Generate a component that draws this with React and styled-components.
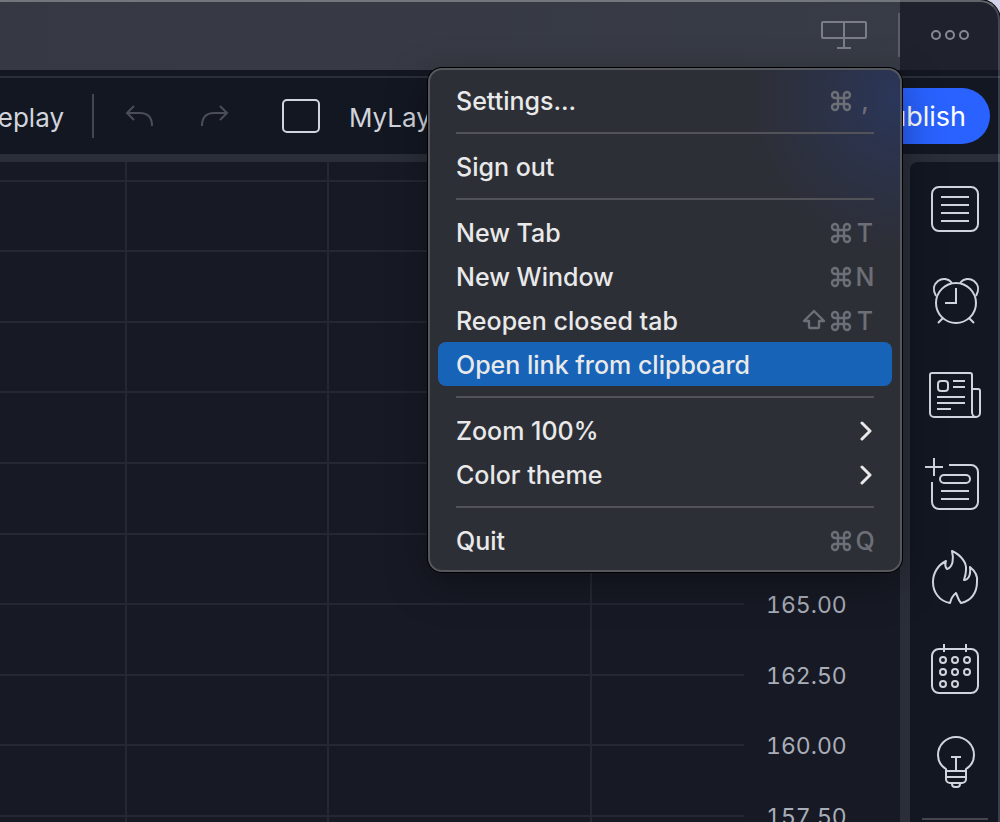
import { useState } from 'react';
import styled, { createGlobalStyle } from 'styled-components';

const GlobalStyle = createGlobalStyle`
* {
  box-sizing: border-box;
}
body {
  margin: 0;
  background: #d3d3ea;
  font-family: Inter, "Liberation Sans", sans-serif;
  overflow: hidden;
}
button {
  font: inherit;
  color: inherit;
  background: none;
  border: none;
  margin: 0;
  padding: 0;
  cursor: pointer;
}
`;

const Window = styled.div`
  position: relative;
  display: flex;
  flex-direction: column;
  height: 100vh;
  background: #131722;
  color: #d1d4dc;
  border-top-right-radius: 20px;
  box-shadow: 0 0 0 1px #000;
  overflow: hidden;

  &::after {
    content: "";
    position: absolute;
    inset: 0;
    border-top: 2px solid rgba(255, 255, 255, 0.3);
    border-right: 2px solid rgba(255, 255, 255, 0.17);
    border-top-right-radius: 20px;
    pointer-events: none;
  }
`;

const TitleBar = styled.header`
  display: flex;
  flex: none;
  height: 70px;
  background: linear-gradient(90deg, #363943, #383c46);
`;

const TitleTools = styled.div`
  display: flex;
  flex: 1;
  justify-content: flex-end;
  align-items: center;
  gap: 30px;
  color: #7b7e87;
`;

const MainMenuButton = styled.button`
  width: 100px;
  background: #1f222d;
  color: #868993;
  display: flex;
  align-items: center;
  justify-content: center;
`;

const Divider = styled.span`
  flex: none;
  width: 2px;
  height: 44px;
  background: ${(props) => props.$color};
`;

const Toolbar = styled.div`
  display: flex;
  flex: none;
  align-items: center;
  height: 78px;
  margin-top: 6px;
  padding-right: 10px;
  border-top: 2px solid #2a2e39;
  font-size: 26px;
`;

const ReplayButton = styled.button`
  display: flex;
  justify-content: flex-end;
  width: 64px;
  margin-right: 28px;
  padding-top: 2px;
  overflow: hidden;
`;

const HistoryButton = styled.button`
  display: flex;
  margin-left: ${(props) => props.$gap}px;
  color: #4b4e59;
`;

const LayoutButton = styled.button`
  display: flex;
  align-items: center;
  gap: 29px;
  margin-left: 52px;
`;

const LayoutSquare = styled.span`
  width: 38px;
  height: 34px;
  border: 2px solid #d1d4dc;
  border-radius: 5px;
`;

const LayoutName = styled.span`
  padding-top: 2px;
`;

const PublishButton = styled.button`
  height: 56px;
  margin-left: auto;
  padding: 0 24px;
  border-radius: 28px;
  background: #2962ff;
  color: #fff;
  font-size: 27px;
`;

const Body = styled.div`
  display: flex;
  flex: 1;
  min-height: 0;
  padding-top: 8px;
  background: #2a2e39;
`;

const Chart = styled.main`
  display: flex;
  flex: 1;
  min-width: 0;
  background: #171a25;
`;

const Plot = styled.svg`
  flex: 1;
  min-width: 0;
  height: 100%;
`;

const PriceAxis = styled.div`
  flex: none;
  width: 156px;
  padding: 56px 0 0 22px;
  overflow: hidden;
  color: #a9adb8;
  font-size: 23px;
  font-variant-numeric: tabular-nums;
`;

const Price = styled.div`
  height: 70px;
  line-height: 70px;

  &:nth-child(even) {
    height: 71px;
  }
`;

const Sidebar = styled.nav`
  display: flex;
  flex-direction: column;
  flex: none;
  width: 90px;
  margin-left: 10px;
  background: #131722;
  border-top-left-radius: 8px;
  overflow: hidden;
`;

const SideButton = styled.button`
  display: flex;
  flex: none;
  align-items: center;
  justify-content: center;
  height: 92px;
`;

const SideRule = styled.hr`
  flex: none;
  width: 66px;
  height: 2px;
  margin: 12px;
  border: none;
  background: #434651;
`;

const Menu = styled.div`
  position: absolute;
  top: 68px;
  right: 98px;
  z-index: 1;
  display: flex;
  flex-direction: column;
  width: 474px;
  padding: 8px;
  border: 2px solid #55575e;
  border-radius: 14px;
  background:
    radial-gradient(circle at 100% 6%, #2a375b 0, rgba(43, 52, 82, 0.8) 50px, rgba(45, 47, 55, 0) 150px),
    #2d2f37;
  background-origin: border-box;
  box-shadow: 0 0 0 1px #000, 0 12px 40px rgba(0, 0, 0, 0.35);
  color: #e9e9ea;
`;

const MenuItem = styled.button`
  display: flex;
  align-items: center;
  justify-content: space-between;
  height: 44px;
  padding: 2px 18px 0;
  border-radius: 8px;
  background: ${(props) => (props.$active ? '#1763b8' : 'transparent')};
  font-size: 25px;
  font-weight: 500;
  text-align: left;
`;

const MenuRule = styled.hr`
  width: auto;
  height: 2px;
  margin: 10px 18px;
  border: none;
  background: #515359;
`;

const Shortcut = styled.span`
  display: flex;
  align-items: center;
  gap: 3px;
  color: #6d6f77;
`;

const Key = styled.span`
  display: flex;
  justify-content: center;
  width: 18px;
`;

const Stroke = ({ size = 60, height = size, width = 2, children, ...rest }) => (
  <svg
    width={size}
    height={height}
    viewBox={`0 0 ${size} ${height}`}
    fill="none"
    stroke="currentColor"
    strokeWidth={width}
    aria-hidden="true"
    {...rest}
  >
    {children}
  </svg>
);

const CommandIcon = () => (
  <Stroke size={24} width={2.4}>
    <path d="M15 6v12a3 3 0 1 0 3-3H6a3 3 0 1 0 3 3V6a3 3 0 1 0-3 3h12a3 3 0 1 0-3-3" />
  </Stroke>
);

const ShiftIcon = () => (
  <Stroke size={24} width={2.4} strokeLinejoin="round">
    <path d="M12 2L2 12h5v6q0 1 1 1h8q1 0 1-1v-6h5z" />
  </Stroke>
);

const ChevronIcon = () => (
  <Stroke size={16} height={20} width={3} strokeLinecap="round" strokeLinejoin="round">
    <path d="M4 2l8 8-8 8" />
  </Stroke>
);

const sideItems = [
  {
    label: 'Watchlist',
    icon: (
      <>
        <rect x="7" y="9" width="46" height="44" rx="7" />
        <path d="M16 19h28M16 27h28M16 35h28M16 43h28" />
      </>
    ),
  },
  {
    label: 'Alerts',
    icon: (
      <>
        <circle cx="31" cy="33" r="20" />
        <path d="M31 18v15H20" />
        <path d="M27 13C23 8 17 8 13 11C8 15 8 21 11 26M35 13C39 8 45 8 49 11C54 15 54 21 51 26" />
        <path d="M18 48l-5 5M44 48l5 5" />
      </>
    ),
  },
  {
    label: 'News',
    icon: (
      <>
        <path d="M47 51V13a2 2 0 0 0-2-2H7a2 2 0 0 0-2 2v38a4 4 0 0 0 4 4h42a4 4 0 0 0 4-4V29a2 2 0 0 0-2-2h-6" />
        <path d="M47 50a4 5 0 0 0 4 5" />
        <rect x="13" y="19" width="10" height="10" rx="3" />
        <path d="M28 19h12M28 25h12M12 35h28M12 41h28M12 47h14" />
      </>
    ),
  },
  {
    label: 'Data window',
    icon: (
      <>
        <path d="M0 13h18M9 4v18" />
        <path d="M24 11h22a7 7 0 0 1 7 7v30a7 7 0 0 1-7 7H14a7 7 0 0 1-7-7V28" />
        <rect x="15" y="21" width="30" height="8" rx="4" />
        <path d="M16 37h28M16 45h28" />
      </>
    ),
  },
  {
    label: 'Hotlists',
    icon: (
      <path
        strokeLinejoin="round"
        d="M27 5C36 9 42 17 41 24C41 28 40 31 39 34C43 34 46 30 45 21C50 25 53 30 52 36C52 47 46 55 36 57C33 54 33 51 31 47C27 50 26 53 25 57C14 55 8 46 8 36C8 27 13 19 21 15C20 18 20 21 22 23C28 21 29 13 27 5Z"
      />
    ),
  },
  {
    label: 'Calendar',
    icon: (
      <>
        <rect x="7" y="11" width="46" height="44" rx="7" />
        <path d="M19 6v8M41 6v8" />
        {[[18, 22], [30, 22], [42, 22], [18, 34], [30, 34], [42, 34], [18, 46], [30, 46]].map(([x, y]) => (
          <circle key={`${x}-${y}`} cx={x} cy={y} r="3" />
        ))}
      </>
    ),
  },
  {
    label: 'Ideas',
    icon: (
      <>
        <path d="M21 41v-2C16 36 13 31 13 25a18 18 0 0 1 36 0C49 31 46 36 41 39v2" />
        <path d="M21 41h20v8a4 4 0 0 1-4 4H25a4 4 0 0 1-4-4zM21 47h20M27 53v1q0 3 3 3h2q3 0 3-3v-1" />
        <path d="M26 27h10M31 27v14" />
      </>
    ),
  },
];

const menuGroups = [
  [{ label: 'Settings...', keys: ['cmd', ','] }],
  [{ label: 'Sign out' }],
  [
    { label: 'New Tab', keys: ['cmd', 'T'] },
    { label: 'New Window', keys: ['cmd', 'N'] },
    { label: 'Reopen closed tab', keys: ['shift', 'cmd', 'T'] },
    { label: 'Open link from clipboard' },
  ],
  [
    { label: 'Zoom 100%', submenu: true },
    { label: 'Color theme', submenu: true },
  ],
  [{ label: 'Quit', keys: ['cmd', 'Q'] }],
];

const prices = ['177.50', '175.00', '172.50', '170.00', '167.50', '165.00', '162.50', '160.00', '157.50'];
const rows = [19, 89, 160, 230, 301, 372, 442, 513, 583, 654];
const columns = [126, 328, 591];

function ShortcutKey({ name }) {
  if (name === 'cmd') return <CommandIcon />;
  if (name === 'shift') return <ShiftIcon />;
  return <Key>{name}</Key>;
}

function AppMenu({ active, onHover }) {
  return (
    <Menu role="menu">
      {menuGroups.map((group, index) => [
        index > 0 && <MenuRule key={`rule-${index}`} />,
        ...group.map((item) => (
          <MenuItem
            key={item.label}
            role="menuitem"
            $active={active === item.label}
            onMouseEnter={() => onHover(item.label)}
          >
            {item.label}
            {item.keys && (
              <Shortcut>
                {item.keys.map((key) => (
                  <ShortcutKey key={key} name={key} />
                ))}
              </Shortcut>
            )}
            {item.submenu && <ChevronIcon />}
          </MenuItem>
        )),
      ])}
    </Menu>
  );
}

function App() {
  const [menuOpen, setMenuOpen] = useState(true);
  const [active, setActive] = useState('Open link from clipboard');

  return (
    <>
      <GlobalStyle />
      <Window>
        <TitleBar>
          <TitleTools>
            <Stroke size={48} height={30}>
              <rect x="2" y="2" width="44" height="16" rx="1" />
              <path d="M24 2v25M17 28h14" />
            </Stroke>
            <Divider $color="#5b5e68" />
          </TitleTools>
          <MainMenuButton aria-label="Main menu" onClick={() => setMenuOpen(!menuOpen)}>
            <Stroke size={40} height={12}>
              <circle cx="6" cy="6" r="4" />
              <circle cx="20" cy="6" r="4" />
              <circle cx="34" cy="6" r="4" />
            </Stroke>
          </MainMenuButton>
        </TitleBar>
        <Toolbar>
          <ReplayButton>Replay</ReplayButton>
          <Divider $color="#434651" />
          <HistoryButton aria-label="Undo" $gap={30}>
            <Stroke size={30} height={24}>
              <path d="M10 2L3 9l7 7M3 9h13q12 0 12 13" />
            </Stroke>
          </HistoryButton>
          <HistoryButton aria-label="Redo" $gap={46}>
            <Stroke size={30} height={24}>
              <path d="M20 2l7 7-7 7M27 9H14Q2 9 2 22" />
            </Stroke>
          </HistoryButton>
          <LayoutButton>
            <LayoutSquare />
            <LayoutName>MyLayout</LayoutName>
          </LayoutButton>
          <PublishButton>Publish</PublishButton>
        </Toolbar>
        <Body>
          <Chart>
            <Plot stroke="#242833" strokeWidth="2" aria-hidden="true">
              {rows.map((y) => (
                <line key={y} x1="0" x2="100%" y1={y} y2={y} />
              ))}
              {columns.map((x) => (
                <line key={x} x1={x} x2={x} y1="0" y2="100%" />
              ))}
            </Plot>
            <PriceAxis>
              {prices.map((price) => (
                <Price key={price}>{price}</Price>
              ))}
            </PriceAxis>
          </Chart>
          <Sidebar>
            {sideItems.map((item) => (
              <SideButton key={item.label} aria-label={item.label}>
                <Stroke>{item.icon}</Stroke>
              </SideButton>
            ))}
            <SideRule />
          </Sidebar>
        </Body>
        {menuOpen && <AppMenu active={active} onHover={setActive} />}
      </Window>
    </>
  );
}

export default App;
